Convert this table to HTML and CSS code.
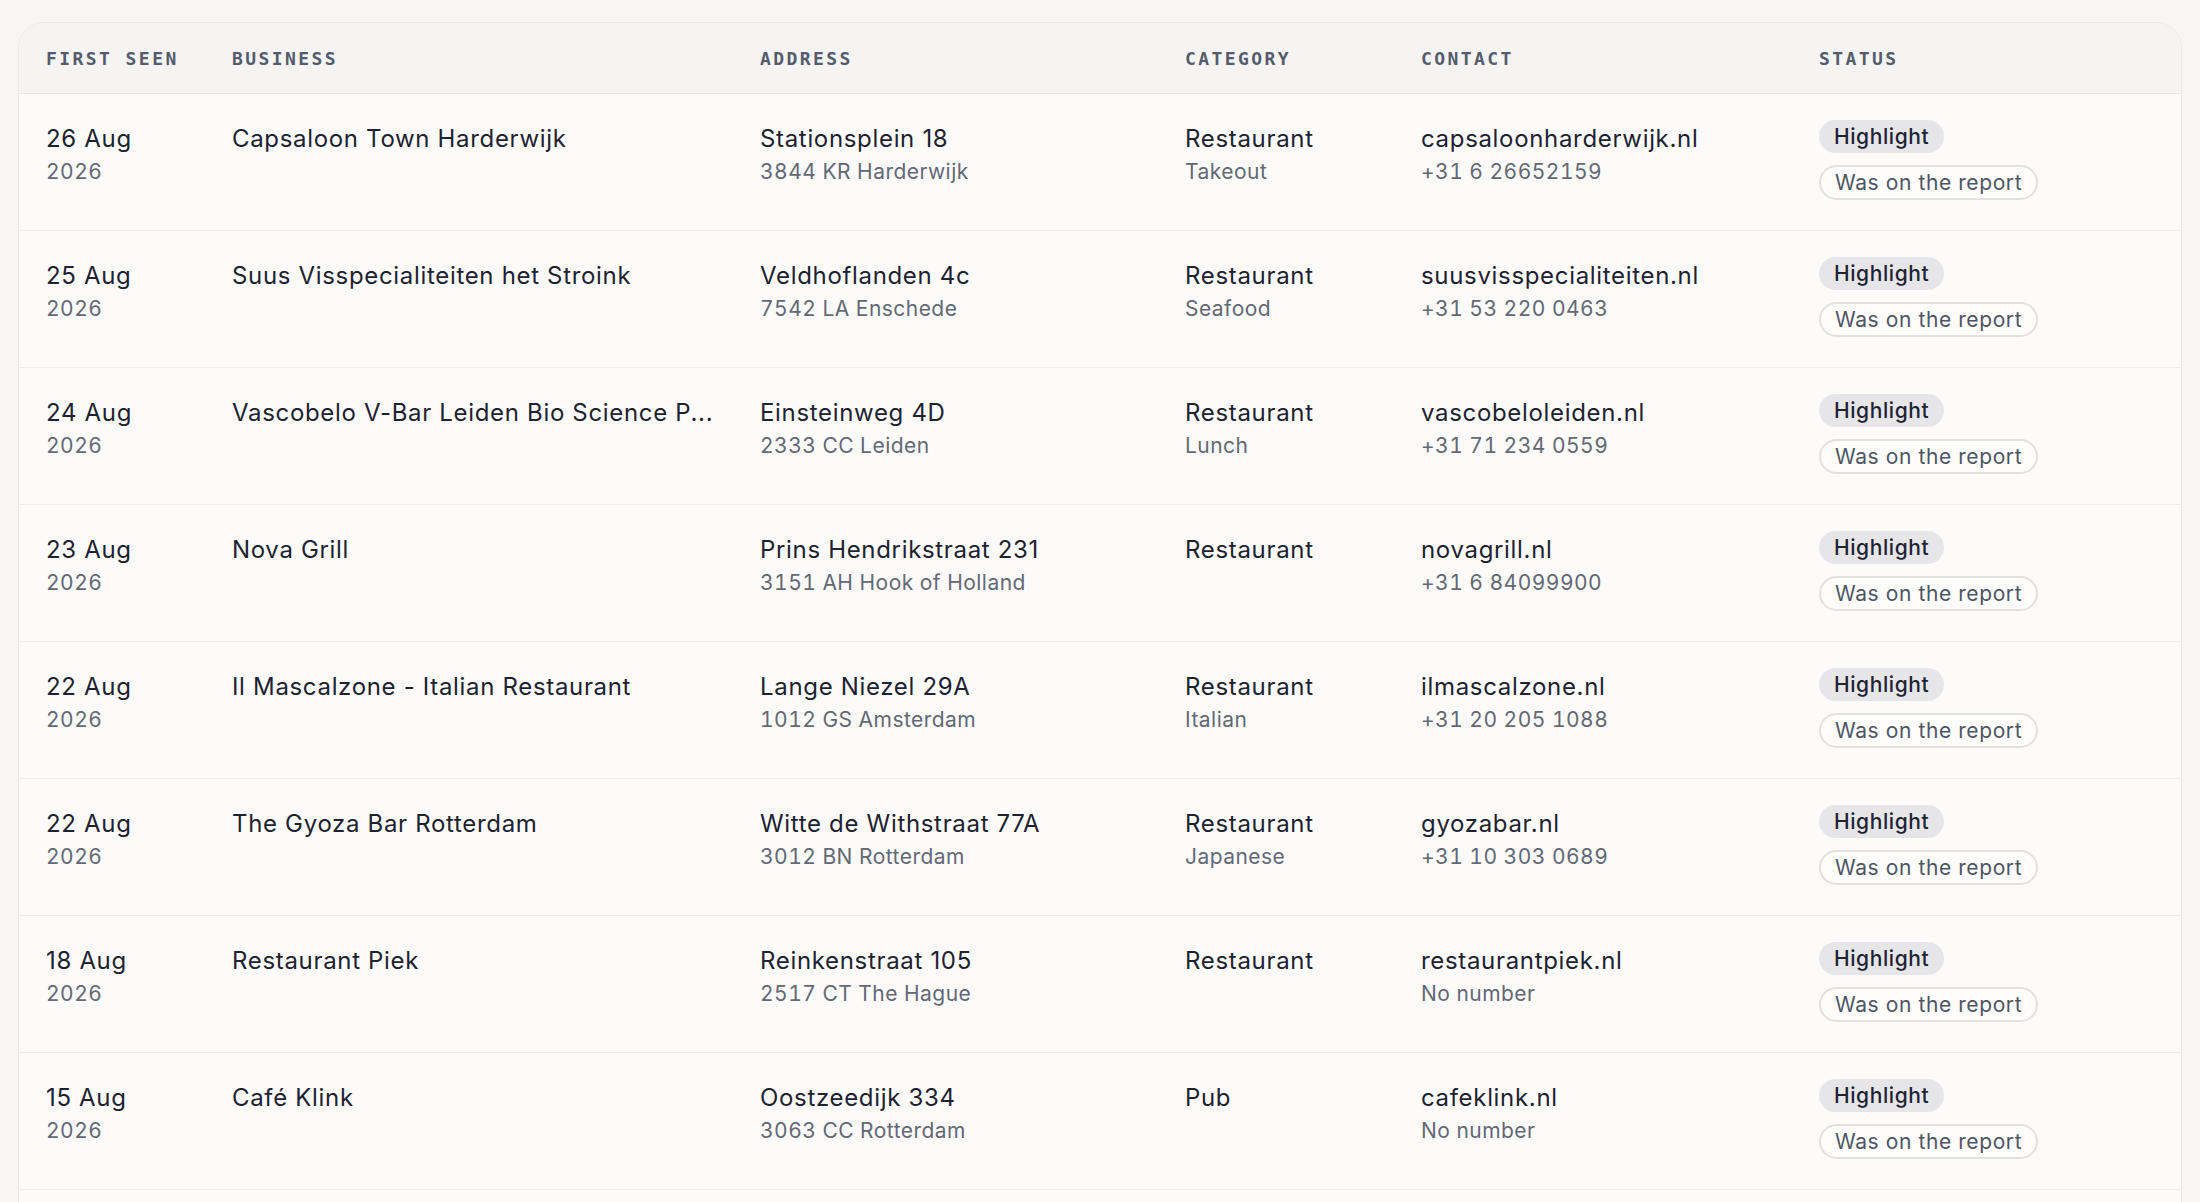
FILE: index.html
```html
<!DOCTYPE html>
<html lang="en">
<head>
<meta charset="utf-8">
<title>First seen</title>
<link rel="stylesheet" href="styles.css">
</head>
<body>
<div class="card">
  <table class="list">
    <colgroup>
      <col class="c-date"><col class="c-biz"><col class="c-addr"><col class="c-cat"><col class="c-contact"><col class="c-status">
    </colgroup>
    <thead>
      <tr>
        <th>First seen</th><th>Business</th><th>Address</th><th>Category</th><th>Contact</th><th>Status</th>
      </tr>
    </thead>
    <tbody>
      <tr>
        <td><div class="pri">26 Aug</div><div class="sec">2026</div></td>
        <td><div class="pri biz">Capsaloon Town Harderwijk</div></td>
        <td><div class="pri">Stationsplein 18</div><div class="sec">3844 KR Harderwijk</div></td>
        <td><div class="pri">Restaurant</div><div class="sec">Takeout</div></td>
        <td><div class="pri">capsaloonharderwijk.nl</div><div class="sec">+31 6 26652159</div></td>
        <td><div class="pills"><span class="pill pill-hl">Highlight</span><span class="pill pill-out">Was on the report</span></div></td>
      </tr>
      <tr>
        <td><div class="pri">25 Aug</div><div class="sec">2026</div></td>
        <td><div class="pri biz">Suus Visspecialiteiten het Stroink</div></td>
        <td><div class="pri">Veldhoflanden 4c</div><div class="sec">7542 LA Enschede</div></td>
        <td><div class="pri">Restaurant</div><div class="sec">Seafood</div></td>
        <td><div class="pri">suusvisspecialiteiten.nl</div><div class="sec">+31 53 220 0463</div></td>
        <td><div class="pills"><span class="pill pill-hl">Highlight</span><span class="pill pill-out">Was on the report</span></div></td>
      </tr>
      <tr>
        <td><div class="pri">24 Aug</div><div class="sec">2026</div></td>
        <td><div class="pri biz">Vascobelo V-Bar Leiden Bio Science P...</div></td>
        <td><div class="pri">Einsteinweg 4D</div><div class="sec">2333 CC Leiden</div></td>
        <td><div class="pri">Restaurant</div><div class="sec">Lunch</div></td>
        <td><div class="pri">vascobeloleiden.nl</div><div class="sec">+31 71 234 0559</div></td>
        <td><div class="pills"><span class="pill pill-hl">Highlight</span><span class="pill pill-out">Was on the report</span></div></td>
      </tr>
      <tr>
        <td><div class="pri">23 Aug</div><div class="sec">2026</div></td>
        <td><div class="pri biz">Nova Grill</div></td>
        <td><div class="pri">Prins Hendrikstraat 231</div><div class="sec">3151 AH Hook of Holland</div></td>
        <td><div class="pri">Restaurant</div></td>
        <td><div class="pri">novagrill.nl</div><div class="sec">+31 6 84099900</div></td>
        <td><div class="pills"><span class="pill pill-hl">Highlight</span><span class="pill pill-out">Was on the report</span></div></td>
      </tr>
      <tr>
        <td><div class="pri">22 Aug</div><div class="sec">2026</div></td>
        <td><div class="pri biz">Il Mascalzone - Italian Restaurant</div></td>
        <td><div class="pri">Lange Niezel 29A</div><div class="sec">1012 GS Amsterdam</div></td>
        <td><div class="pri">Restaurant</div><div class="sec">Italian</div></td>
        <td><div class="pri">ilmascalzone.nl</div><div class="sec">+31 20 205 1088</div></td>
        <td><div class="pills"><span class="pill pill-hl">Highlight</span><span class="pill pill-out">Was on the report</span></div></td>
      </tr>
      <tr>
        <td><div class="pri">22 Aug</div><div class="sec">2026</div></td>
        <td><div class="pri biz">The Gyoza Bar Rotterdam</div></td>
        <td><div class="pri">Witte de Withstraat 77A</div><div class="sec">3012 BN Rotterdam</div></td>
        <td><div class="pri">Restaurant</div><div class="sec">Japanese</div></td>
        <td><div class="pri">gyozabar.nl</div><div class="sec">+31 10 303 0689</div></td>
        <td><div class="pills"><span class="pill pill-hl">Highlight</span><span class="pill pill-out">Was on the report</span></div></td>
      </tr>
      <tr>
        <td><div class="pri">18 Aug</div><div class="sec">2026</div></td>
        <td><div class="pri biz">Restaurant Piek</div></td>
        <td><div class="pri">Reinkenstraat 105</div><div class="sec">2517 CT The Hague</div></td>
        <td><div class="pri">Restaurant</div></td>
        <td><div class="pri">restaurantpiek.nl</div><div class="sec">No number</div></td>
        <td><div class="pills"><span class="pill pill-hl">Highlight</span><span class="pill pill-out">Was on the report</span></div></td>
      </tr>
      <tr>
        <td><div class="pri">15 Aug</div><div class="sec">2026</div></td>
        <td><div class="pri biz">Café Klink</div></td>
        <td><div class="pri">Oostzeedijk 334</div><div class="sec">3063 CC Rotterdam</div></td>
        <td><div class="pri">Pub</div></td>
        <td><div class="pri">cafeklink.nl</div><div class="sec">No number</div></td>
        <td><div class="pills"><span class="pill pill-hl">Highlight</span><span class="pill pill-out">Was on the report</span></div></td>
      </tr>
      <tr class="more">
        <td></td><td></td><td></td><td></td><td></td><td></td>
      </tr>
    </tbody>
  </table>
</div>
</body>
</html>
```
FILE: styles.css
```css
html, body {
  margin: 0;
  padding: 0;
}

body {
  background: #f8f6f4;
  padding: 22px 18px 0 18px;
  font-family: "Inter", "Open Sans", sans-serif;
  color: #1d2230;
}

.card {
  background: #fcfbfa;
  border: 1.5px solid #ebe8e5;
  border-radius: 26px;
  overflow: hidden;
}

.list {
  width: 100%;
  border-collapse: collapse;
  table-layout: fixed;
}

.c-date { width: 213px; }
.c-biz { width: 528px; }
.c-addr { width: 425px; }
.c-cat { width: 236px; }
.c-contact { width: 398px; }

.list th {
  background: #f5f4f2;
  height: 70px;
  padding: 0 24px 0 0;
  text-align: left;
  font-family: "DejaVu Sans Mono", "Liberation Mono", monospace;
  font-weight: 700;
  font-size: 18px;
  letter-spacing: 0.135em;
  text-transform: uppercase;
  color: #545c6c;
  border-bottom: 1.5px solid #e9e7e4;
  vertical-align: middle;
}

.list th:first-child,
.list td:first-child {
  padding-left: 27px;
}

.list td {
  height: 137px;
  box-sizing: border-box;
  padding: 27px 24px 0 0;
  vertical-align: top;
  border-bottom: 1.5px solid #efedeb;
}

.pri {
  font-size: 24px;
  line-height: 36px;
  letter-spacing: 0.028em;
  color: #1d2230;
  white-space: nowrap;
  overflow: hidden;
  text-overflow: ellipsis;
}

.sec {
  font-size: 21px;
  line-height: 30px;
  letter-spacing: 0.022em;
  font-variant-numeric: tabular-nums;
  color: #636875;
  white-space: nowrap;
}

.pills {
  display: flex;
  flex-direction: column;
  align-items: flex-start;
  gap: 12px;
  margin-top: -1px;
}

.pill {
  display: inline-block;
  font-size: 21px;
  line-height: 27px;
  border-radius: 999px;
  white-space: nowrap;
  letter-spacing: 0.028em;
}

.pill-hl {
  background: #e6e6e9;
  color: #1d2333;
  font-weight: 500;
  padding: 3px 15px;
}

.pill-out {
  background: #fefdfc;
  color: #4d5565;
  border: 2px solid #e3e0dd;
  padding: 2px 14px;
}
```
